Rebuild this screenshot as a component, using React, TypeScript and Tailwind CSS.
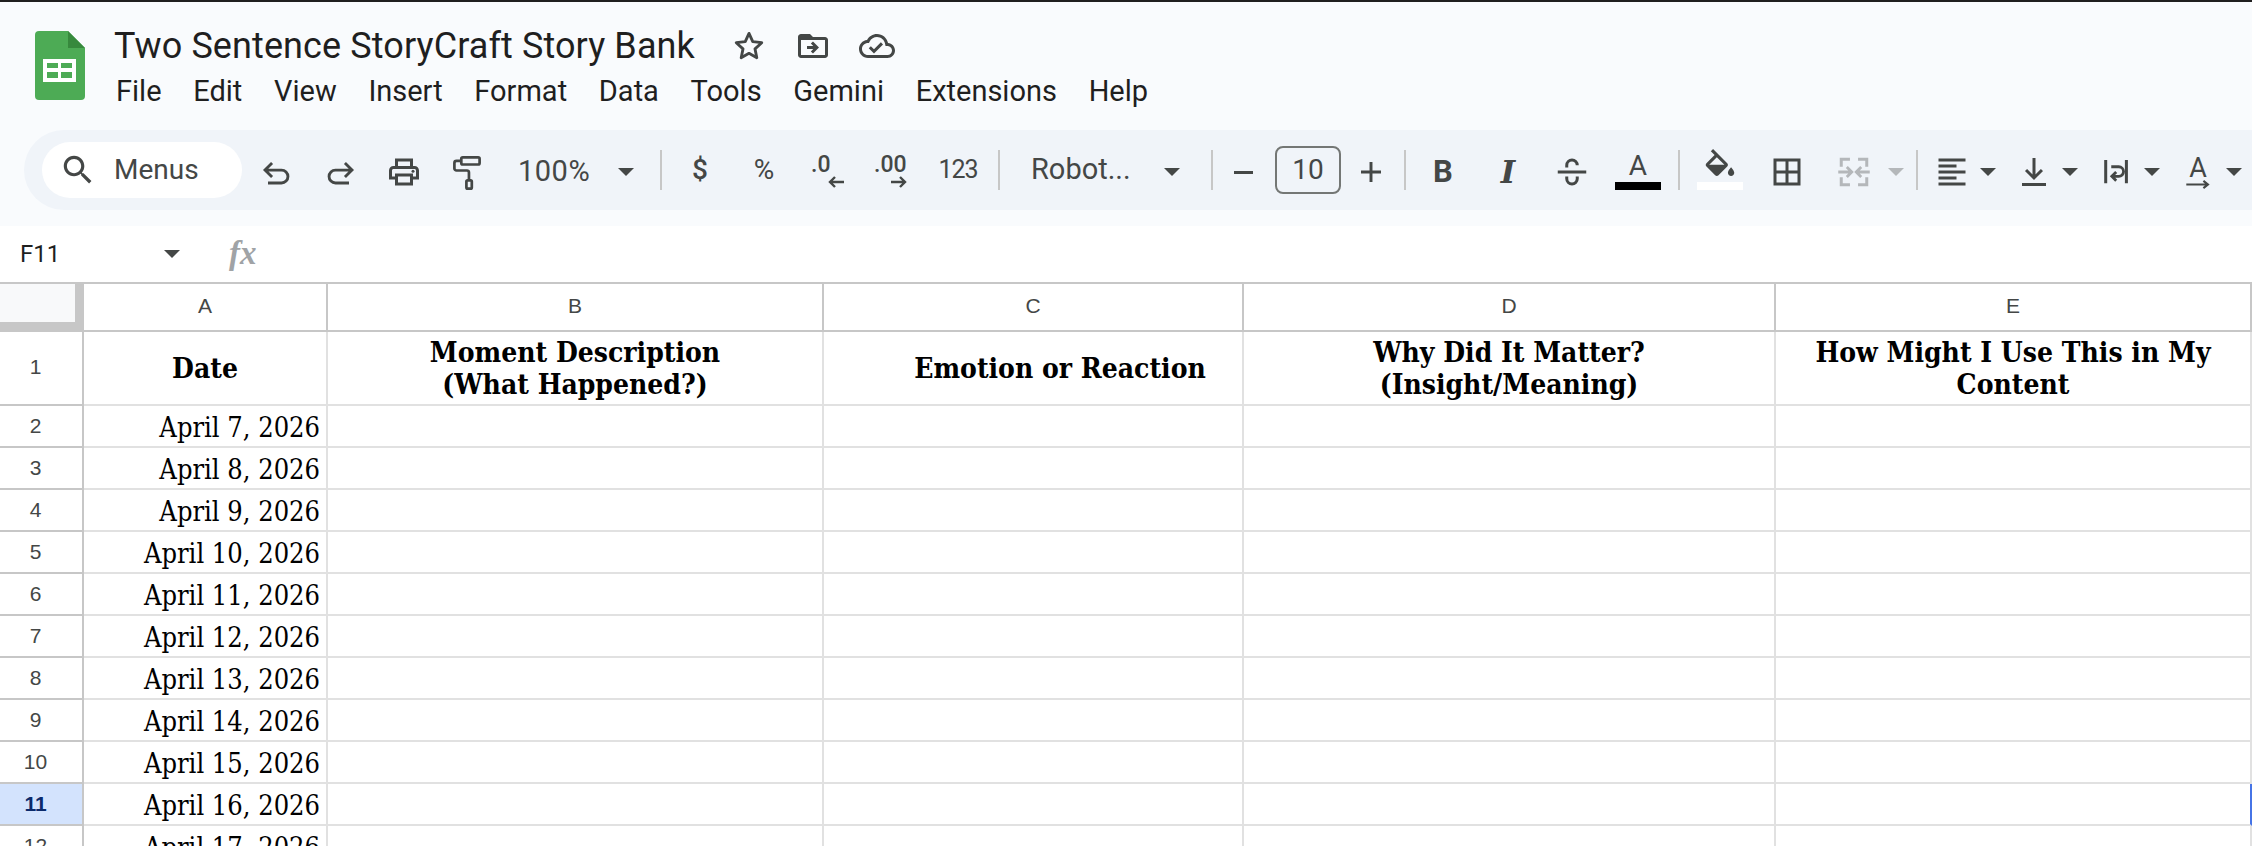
import type { ReactNode } from "react";

const SANS = "font-['Roboto',sans-serif]";
const SERIF = "font-['DejaVu_Serif_Condensed','DejaVu_Serif',serif]";

const menus = ["File", "Edit", "View", "Insert", "Format", "Data", "Tools", "Gemini", "Extensions", "Help"];

const dates = [7, 8, 9, 10, 11, 12, 13, 14, 15, 16, 17];

const Icon = ({ children, className = "w-[36px] h-[36px]" }: { children: ReactNode; className?: string }) => (
  <svg viewBox="0 0 24 24" fill="currentColor" className={className}>
    {children}
  </svg>
);

const Caret = ({ className = "text-[#444746]" }: { className?: string }) => (
  <svg viewBox="0 0 16 8" fill="currentColor" className={`w-[16px] h-[8px] shrink-0 ${className}`}>
    <polygon points="0,0 16,0 8,8" />
  </svg>
);

const Slot = ({ className, children }: { className: string; children: ReactNode }) => (
  <div className={`flex items-center justify-center shrink-0 h-full pt-[4px] ${className}`}>{children}</div>
);

const Sep = ({ className = "" }: { className?: string }) => (
  <div className={`w-[2px] h-[40px] shrink-0 bg-[#c7c7c7] ${className}`} />
);

const Logo = () => (
  <svg viewBox="0 0 50 69" className="w-[50px] h-[69px] shrink-0">
    <path d="M4 0h29l17 17v48a4 4 0 0 1-4 4H4a4 4 0 0 1-4-4V4a4 4 0 0 1 4-4z" fill="#4dab55" />
    <path d="M33 0l17 17H33z" fill="#37893d" />
    <path d="M8 28h33v23H8z" fill="#fff" />
    <path d="M12 32h11v5H12zM26 32h11v5H26zM12 41h11v6H12zM26 41h11v6H26z" fill="#4dab55" />
  </svg>
);

const Row = ({ n, selected, children }: { n: number; selected?: boolean; children: ReactNode }) => (
  <div className="grid grid-cols-[84px_244px_496px_420px_532px_476px] grid-rows-[42px] h-[42px]">
    <div
      className={`flex items-center justify-center border-r-2 border-b-2 border-r-[#c7c7c7] border-b-[#c7c7c7] font-['Liberation_Sans',sans-serif] text-[21px] leading-none pb-[2px] pr-[11px] ${
        selected ? "bg-[#d3e3fd] text-[#0b2a6b] font-bold" : "text-[#444746]"
      }`}
    >
      {n}
    </div>
    <div className={`flex items-center justify-end border-r-2 border-b-2 border-[#e1e1e1] pr-[6px] pt-[2px] ${SERIF} text-[27px] leading-none text-black whitespace-nowrap`}>
      {children}
    </div>
    <div className="border-r-2 border-b-2 border-[#e1e1e1]" />
    <div className="border-r-2 border-b-2 border-[#e1e1e1]" />
    <div className="border-r-2 border-b-2 border-[#e1e1e1]" />
    <div className={`border-r-2 border-b-2 ${selected ? "border-r-[#4674e6] border-b-[#e1e1e1]" : "border-[#e1e1e1]"}`} />
  </div>
);

const ColHead = ({ children }: { children: ReactNode }) => (
  <div className="flex items-center justify-center border-r-2 border-b-2 border-[#c7c7c7] font-['Liberation_Sans',sans-serif] text-[21px] text-[#444746] pb-[2px]">
    {children}
  </div>
);

const Head = ({ children, className = "" }: { children: ReactNode; className?: string }) => (
  <div className={`flex items-center justify-center text-center border-r-2 border-b-2 border-[#e1e1e1] pt-[2px] ${SERIF} font-bold text-[28px] leading-[32px] text-black whitespace-nowrap ${className}`}>
    <div>{children}</div>
  </div>
);

export default function App() {
  return (
    <div className={`w-[2252px] h-[846px] overflow-hidden bg-white ${SANS}`}>
      <div className="h-[226px] bg-[#f9fbfd] border-t-2 border-[#1f1f1f]">
        <div className="flex h-[128px]">
          <div className="ml-[35px] mt-[29px]">
            <Logo />
          </div>
          <div className="ml-[29px] mt-[23px]">
            <div className="flex items-center h-[42px]">
              <span className="text-[36px] leading-none tracking-[0.1px] text-[#1f1f1f] whitespace-nowrap">
                Two Sentence StoryCraft Story Bank
              </span>
              <div className="flex items-center text-[#444746] ml-[36px] gap-[28px]">
                <Icon>
                  <path d="M12 3.6l2.5 5.5 6 .7-4.5 4.1 1.2 5.9L12 16.9l-5.2 2.9L8 13.9 3.5 9.8l6-.7z" fill="none" stroke="currentColor" strokeWidth="1.9" strokeLinejoin="round" />
                </Icon>
                <Icon>
                  <path d="M20 6h-8l-2-2H4c-1.1 0-2 .9-2 2v12c0 1.1.9 2 2 2h16c1.1 0 2-.9 2-2V8c0-1.1-.9-2-2-2zm0 12H4V8h16v10zm-8.01-9l-1.41 1.41L12.16 12H8v2h4.16l-1.59 1.59L11.99 17 16 13.01 11.99 9z" />
                </Icon>
                <Icon>
                  <path d="M19.35 10.04C18.67 6.59 15.64 4 12 4 9.11 4 6.6 5.64 5.35 8.04 2.34 8.36 0 10.91 0 14c0 3.31 2.69 6 6 6h13c2.76 0 5-2.24 5-5 0-2.64-2.05-4.78-4.65-4.96zM19 18H6c-2.21 0-4-1.79-4-4 0-2.05 1.53-3.76 3.56-3.97l1.07-.11.5-.95C8.08 7.14 9.94 6 12 6c2.62 0 4.88 1.86 5.39 4.43l.3 1.5 1.53.11c1.56.1 2.78 1.41 2.78 2.96 0 1.65-1.35 3-3 3zm-9-3.82l-2.09-2.09L6.5 13.5 10 17l6.01-6.01-1.41-1.41z" />
                </Icon>
              </div>
            </div>
            <div className="flex items-center gap-[31.7px] mt-[4px] ml-[2px] h-[42px] text-[29px] text-[#1f1f1f]">
              {menus.map((m) => (
                <span key={m}>{m}</span>
              ))}
            </div>
          </div>
        </div>

        <div className="flex items-center h-[80px] ml-[24px] rounded-l-[40px] bg-[#f0f4f9] text-[#444746]">
          <div className="flex items-center w-[200px] h-[56px] ml-[18px] mr-[3px] shrink-0 rounded-full bg-white">
            <Icon className="w-[38px] h-[38px] ml-[17px]">
              <path d="M15.5 14h-.79l-.28-.27C15.41 12.59 16 11.11 16 9.5 16 5.91 13.09 3 9.5 3S3 5.91 3 9.5 5.91 16 9.5 16c1.61 0 3.09-.59 4.23-1.57l.27.28v.79l5 4.99L20.49 19l-4.99-5zm-6 0C7.01 14 5 11.99 5 9.5S7.01 5 9.5 5 14 7.01 14 9.5 11.99 14 9.5 14z" />
            </Icon>
            <span className="ml-[17px] text-[28px]">Menus</span>
          </div>

          <Slot className="w-[63px]">
            <Icon>
              <path d="M8.7 6L4 10.7l4.7 4.7M4.5 10.7H15a4.3 4.3 0 0 1 0 8.6H6" fill="none" stroke="currentColor" strokeWidth="1.9" />
            </Icon>
          </Slot>
          <Slot className="w-[63px]">
            <Icon>
              <path d="M15.3 6L20 10.7l-4.7 4.7M19.5 10.7H9a4.3 4.3 0 0 0 0 8.6h9" fill="none" stroke="currentColor" strokeWidth="1.9" />
            </Icon>
          </Slot>
          <Slot className="w-[65px]">
            <Icon>
              <path d="M19 8h-1V3H6v5H5c-1.66 0-3 1.34-3 3v6h4v4h12v-4h4v-6c0-1.66-1.34-3-3-3zM8 5h8v3H8V5zm8 12v2H8v-4h8v2zm2-2v-2H6v2H4v-4c0-.55.45-1 1-1h14c.55 0 1 .45 1 1v4h-2z" />
              <circle cx="18" cy="11.5" r="1" />
            </Icon>
          </Slot>
          <Slot className="w-[61px]">
            <Icon>
              <rect x="8.2" y="2.2" width="12.2" height="4.8" rx="1" fill="none" stroke="currentColor" strokeWidth="1.8" />
              <path d="M8 4.6H5a1.4 1.4 0 0 0-1.4 1.4v3.6A1.4 1.4 0 0 0 5 11h7a1.3 1.3 0 0 1 1.3 1.3v5.3" fill="none" stroke="currentColor" strokeWidth="1.8" />
              <rect x="11.6" y="17.6" width="3.6" height="5.5" rx="0.8" fill="none" stroke="currentColor" strokeWidth="1.8" />
            </Icon>
          </Slot>
          <div className="flex items-center justify-between w-[163px] h-full shrink-0 pt-[4px] pl-[21px] pr-[26px]">
            <span className="text-[29px] tracking-[0.5px]">100%</span>
            <Caret />
          </div>
          <Sep />

          <Slot className="w-[64px] ml-[6px] pb-[4px] text-[28px] font-medium">$</Slot>
          <Slot className="w-[64px] pb-[4px] text-[28px]">%</Slot>
          <Slot className="w-[64px]">
            <div className="relative w-[34px] h-[40px]">
              <span className="absolute left-0 top-[-3px] text-[23px] font-medium leading-[32px]">.0</span>
              <svg viewBox="0 0 18 12" className="absolute right-0 bottom-[4px] w-[18px] h-[12px]">
                <path d="M17 6H3M8 1L3 6l5 5" fill="none" stroke="currentColor" strokeWidth="2.4" />
              </svg>
            </div>
          </Slot>
          <Slot className="w-[64px]">
            <div className="relative w-[36px] h-[40px]">
              <span className="absolute left-0 top-[-3px] text-[23px] font-medium leading-[32px]">.00</span>
              <svg viewBox="0 0 18 12" className="absolute right-[2px] bottom-[4px] w-[18px] h-[12px]">
                <path d="M1 6h14M10 1l5 5-5 5" fill="none" stroke="currentColor" strokeWidth="2.4" />
              </svg>
            </div>
          </Slot>
          <Slot className="w-[68px] pb-[4px] text-[25px] tracking-[-1px]">123</Slot>
          <Sep className="ml-[6px]" />

          <div className="flex items-center justify-between w-[211px] h-full shrink-0 pt-[4px] pl-[31px] pr-[31px]">
            <span className="text-[29px] mb-[4px]">Robot...</span>
            <Caret />
          </div>
          <Sep />

          <Slot className="w-[60px]">
            <div className="w-[19px] h-[3px] bg-[#444746]" />
          </Slot>
          <div className="flex items-center justify-center w-[66px] h-[48px] ml-[2px] shrink-0 rounded-[8px] border-2 border-[#747775] text-[28px]">
            10
          </div>
          <Slot className="w-[60px]">
            <Icon className="w-[32px] h-[32px]">
              <path d="M12 4.5v15M4.5 12h15" fill="none" stroke="currentColor" strokeWidth="2.2" />
            </Icon>
          </Slot>
          <Sep className="ml-[3px]" />

          <Slot className="w-[64px] ml-[5px] text-[31px] font-bold">B</Slot>
          <Slot className="w-[64px] ml-[1px] font-['DejaVu_Serif',serif] text-[31px] font-bold italic">I</Slot>
          <Slot className="w-[64px]">
            <Icon>
              <path d="M2.5 12h19M8.5 9V7.5a3.5 3.5 0 0 1 7 0M8.5 15v1.5a3.5 3.5 0 0 0 7 0V15" fill="none" stroke="currentColor" strokeWidth="2" />
            </Icon>
          </Slot>
          <Slot className="w-[64px] ml-[2px] pb-[3px]">
            <div className="flex flex-col items-center">
              <span className="text-[28px] leading-[30px]">A</span>
              <div className="w-[46px] h-[8px] mt-[1px] bg-black" />
            </div>
          </Slot>
          <Sep className="ml-[8px]" />

          <Slot className="w-[79px] pb-[5px]">
            <div className="flex flex-col items-center">
              <Icon className="w-[38px] h-[38px] -mb-[5px]">
                <path d="M16.56 8.94L7.62 0 6.21 1.41l2.38 2.38-5.15 5.15c-.59.59-.59 1.54 0 2.12l5.5 5.5c.29.29.68.44 1.06.44s.77-.15 1.06-.44l5.5-5.5c.59-.58.59-1.53 0-2.12zM5.21 10L10 5.21 14.79 10H5.21zM19 11.5s-2 2.17-2 3.5c0 1.1.9 2 2 2s2-.9 2-2c0-1.33-2-3.5-2-3.5z" />
              </Icon>
              <div className="w-[46px] h-[8px] bg-white" />
            </div>
          </Slot>
          <Slot className="w-[56px]">
            <Icon>
              <path d="M3 3v18h18V3H3zm8 16H5v-6h6v6zm0-8H5V5h6v6zm8 8h-6v-6h6v6zm0-8h-6V5h6v6z" />
            </Icon>
          </Slot>
          <Slot className="w-[58px] ml-[10px] text-[#b4b7ba]">
            <Icon>
              <path d="M9.3 3.5H3.5v5M3.5 15.5v5h5.8M14.7 3.5h5.8v5M20.5 15.5v5h-5.8" fill="none" stroke="currentColor" strokeWidth="2" />
              <path d="M1.5 12H10M7.2 8.7l3.3 3.3-3.3 3.3M22.5 12H14M16.8 8.7L13.5 12l3.3 3.3" fill="none" stroke="currentColor" strokeWidth="1.9" />
            </Icon>
          </Slot>
          <Slot className="w-[26px]">
            <Caret className="text-[#b4b7ba]" />
          </Slot>
          <Sep className="ml-[7px]" />

          <Slot className="w-[46px] ml-[11px]">
            <Icon>
              <path d="M15 15H3v2h12v-2zm0-8H3v2h12V7zM3 13h18v-2H3v2zm0 8h18v-2H3v2zM3 3v2h18V3H3z" />
            </Icon>
          </Slot>
          <Slot className="w-[26px]">
            <Caret />
          </Slot>
          <Slot className="w-[46px] ml-[10px]">
            <Icon>
              <path d="M12 2.7V16M6.7 10.7l5.3 5.3 5.3-5.3M4 20.3h16" fill="none" stroke="currentColor" strokeWidth="2" />
            </Icon>
          </Slot>
          <Slot className="w-[26px]">
            <Caret />
          </Slot>
          <Slot className="w-[46px] ml-[9px]">
            <Icon>
              <path d="M5.8 4v15.5M19.6 4v15.5" fill="none" stroke="currentColor" strokeWidth="2" />
              <path d="M9.5 8.5h5a3.2 3.2 0 0 1 0 6.4H10M12.8 12l-2.9 2.9 2.9 2.9" fill="none" stroke="currentColor" strokeWidth="1.9" />
            </Icon>
          </Slot>
          <Slot className="w-[26px] ml-[1px]">
            <Caret />
          </Slot>
          <Slot className="w-[46px] ml-[10px]">
            <div className="flex flex-col items-center">
              <span className="text-[27px] leading-[24px]">A</span>
              <svg viewBox="0 0 30 10" className="w-[28px] h-[9px]">
                <path d="M2 5h24M21 1l5 4-5 4" fill="none" stroke="currentColor" strokeWidth="2.4" />
              </svg>
            </div>
          </Slot>
          <Slot className="w-[26px]">
            <Caret />
          </Slot>
        </div>
      </div>

      <div className="flex items-center h-[56px] bg-white">
        <span className="ml-[20px] w-[144px] text-[24px] text-[#1f1f1f]">F11</span>
        <Caret />
        <span className="ml-[49px] font-['Liberation_Serif',serif] italic font-bold text-[33px] text-[#a0a3a6]">fx</span>
      </div>

      <div className="grid grid-cols-[84px_244px_496px_420px_532px_476px] h-[50px] border-t-2 border-[#c7c7c7]">
        <div className="border-r-2 border-b-2 border-[#c7c7c7] bg-[#c7c7c7]">
          <div className="w-[75px] h-[38px] bg-[#f8f9fa]" />
        </div>
        {["A", "B", "C", "D", "E"].map((c) => (
          <ColHead key={c}>{c}</ColHead>
        ))}
      </div>

      <div className="grid grid-cols-[84px_244px_496px_420px_532px_476px] h-[74px]">
        <div className="flex items-center justify-center border-r-2 border-b-2 border-r-[#c7c7c7] border-b-[#c7c7c7] font-['Liberation_Sans',sans-serif] text-[21px] text-[#444746] pb-[2px] pr-[11px]">
          1
        </div>
        <Head>Date</Head>
        <Head>
          Moment Description
          <br />
          (What Happened?)
        </Head>
        <Head className="pl-[54px]">Emotion or Reaction</Head>
        <Head>
          Why Did It Matter?
          <br />
          (Insight/Meaning)
        </Head>
        <Head>
          How Might I Use This in My
          <br />
          Content
        </Head>
      </div>

      {dates.map((d, i) => (
        <Row key={d} n={i + 2} selected={i + 2 === 11}>
          April {d}, 2026
        </Row>
      ))}
    </div>
  );
}
